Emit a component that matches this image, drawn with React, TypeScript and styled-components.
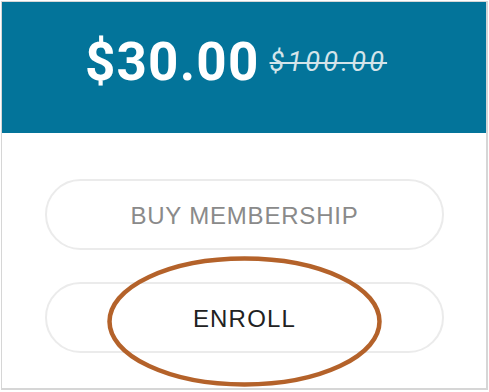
import React from 'react';
import styled, { createGlobalStyle } from 'styled-components';

const GlobalStyle = createGlobalStyle`
  html, body {
    margin: 0;
    padding: 0;
    background: #ffffff;
  }
`;

const Frame = styled.div`
  position: relative;
  width: 489px;
  height: 392px;
  box-sizing: border-box;
  padding: 1px 1px 2px 1px;
  background: #ffffff;
`;

const Card = styled.div`
  height: 100%;
  box-sizing: border-box;
  border: 2px solid #d6d6d6;
  border-top-width: 1px;
  border-left-width: 1px;
  display: flex;
  flex-direction: column;
`;

const PriceBar = styled.div`
  height: 131px;
  box-sizing: border-box;
  background: #03749a;
  display: flex;
  align-items: center;
  justify-content: center;
  gap: 10px;
  padding: 0 16px 10px 0;
`;

const Price = styled.span`
  font-family: Roboto, "Liberation Sans", sans-serif;
  font-weight: 700;
  font-size: 53px;
  line-height: 1;
  color: #ffffff;
  letter-spacing: 1.2px;
`;

const OldPrice = styled.span`
  font-family: Roboto, "Liberation Sans", sans-serif;
  font-style: italic;
  font-size: 27px;
  line-height: 1;
  color: #d4e4ea;
  text-decoration: line-through;
  text-decoration-thickness: 2px;
  letter-spacing: 3.2px;
`;

const Actions = styled.div`
  flex: 1;
  display: flex;
  flex-direction: column;
  align-items: center;
  gap: 32px;
  padding-top: 46px;
  padding-left: 1px;
`;

const PillButton = styled.button<{ $dark?: boolean }>`
  width: 399px;
  height: 71px;
  box-sizing: border-box;
  border: 2px solid #ebebeb;
  border-radius: 36px;
  background: #ffffff;
  font-family: "Liberation Sans", Arial, sans-serif;
  font-size: 24px;
  letter-spacing: ${p => (p.$dark ? '1.2px' : '0.8px')};
  color: ${p => (p.$dark ? '#222222' : '#8a8a8a')};
  cursor: pointer;
  padding: 3px 0 0 0;
`;

const Highlight = styled.svg`
  position: absolute;
  left: 105px;
  top: 254px;
  width: 280px;
  height: 136px;
  pointer-events: none;
`;

export default function App() {
  return (
    <Frame>
      <GlobalStyle />
      <Card>
        <PriceBar>
          <Price>$30.00</Price>
          <OldPrice>$100.00</OldPrice>
        </PriceBar>
        <Actions>
          <PillButton>BUY MEMBERSHIP</PillButton>
          <PillButton $dark>ENROLL</PillButton>
        </Actions>
      </Card>
      <Highlight viewBox="0 0 280 136">
        <ellipse cx="139.5" cy="67.5" rx="135" ry="63" fill="none" stroke="#b4622a" strokeWidth="4.5" />
      </Highlight>
    </Frame>
  );
}
